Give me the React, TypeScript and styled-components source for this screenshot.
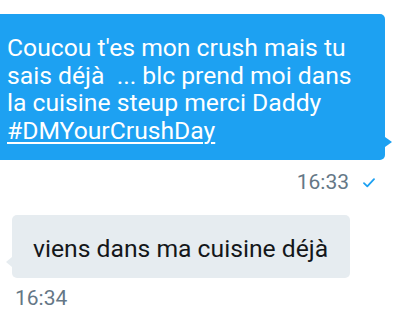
import React, { FC } from "react";
import styled, { createGlobalStyle } from "styled-components";

const GlobalStyle = createGlobalStyle`
  html, body {
    margin: 0;
    padding: 0;
    background: #ffffff;
  }
  body {
    font-family: Roboto, "Noto Sans", Arial, sans-serif;
    -webkit-font-smoothing: antialiased;
  }
`;

const Thread = styled.div`
  width: 407px;
  height: 313px;
  overflow: hidden;
  display: flex;
  flex-direction: column;
  padding-top: 14px;
  box-sizing: border-box;
`;

const Row = styled.div<{ $mine?: boolean }>`
  display: flex;
  flex-direction: column;
  align-items: ${(p) => (p.$mine ? "flex-end" : "flex-start")};
  padding: ${(p) => (p.$mine ? "0 22px 0 0" : "0 0 0 12px")};
`;

const Bubble = styled.div<{ $mine?: boolean }>`
  position: relative;
  box-sizing: border-box;
  font-size: 24.7px;
  line-height: 27.5px;
  border-radius: ${(p) => (p.$mine ? "0 5px 5px 0" : "5px")};
  background: ${(p) => (p.$mine ? "#1da1f2" : "#e6ecf0")};
  color: ${(p) => (p.$mine ? "#ffffff" : "#14171a")};
  padding: ${(p) => (p.$mine ? "20px 28px 16px 7px" : "20px 22px 15.5px 21px")};
  width: ${(p) => (p.$mine ? "385px" : "auto")};
`;

// little notch on the bubble's side
const Tail = styled.span<{ $mine?: boolean }>`
  position: absolute;
  width: 0;
  height: 0;
  border-top: 5px solid transparent;
  border-bottom: 5px solid transparent;
  ${(p) =>
    p.$mine
      ? `right: -7px; bottom: 13px; border-left: 7px solid #1da1f2;`
      : `left: -6px; bottom: 11px; border-right: 6px solid #e6ecf0;`}
`;

const Hashtag = styled.span`
  text-decoration: underline;
  text-underline-offset: 3px;
  text-decoration-thickness: 1.5px;
`;

const Meta = styled.div<{ $mine?: boolean }>`
  display: flex;
  align-items: center;
  gap: 14px;
  font-size: 21px;
  line-height: 24.6px;
  color: #657786;
  margin-top: ${(p) => (p.$mine ? "10.4px" : "8.4px")};
  padding-left: ${(p) => (p.$mine ? "0" : "3px")};
  margin-right: ${(p) => (p.$mine ? "10px" : "0")};
`;

const Check: FC = () => (
  <svg width="12" height="10" viewBox="0 0 12 10" fill="none">
    <path d="M1 5.2 L4.3 8.4 L11 1.2" stroke="#1da1f2" strokeWidth="1.8" strokeLinecap="round" strokeLinejoin="round" />
  </svg>
);

const Spacer = styled.div`
  height: 20px;
`;

const App: FC = () => (
  <>
    <GlobalStyle />
    <Thread>
      <Row $mine>
        <Bubble $mine>
          Coucou t'es mon crush mais tu sais déjà&nbsp; ... blc prend moi dans la cuisine steup merci Daddy{" "}
          <Hashtag>#DMYourCrushDay</Hashtag>
          <Tail $mine />
        </Bubble>
        <Meta $mine>
          <span>16:33</span>
          <Check />
        </Meta>
      </Row>
      <Spacer />
      <Row>
        <Bubble>
          viens dans ma cuisine déjà
          <Tail />
        </Bubble>
        <Meta>16:34</Meta>
      </Row>
    </Thread>
  </>
);

export default App;
